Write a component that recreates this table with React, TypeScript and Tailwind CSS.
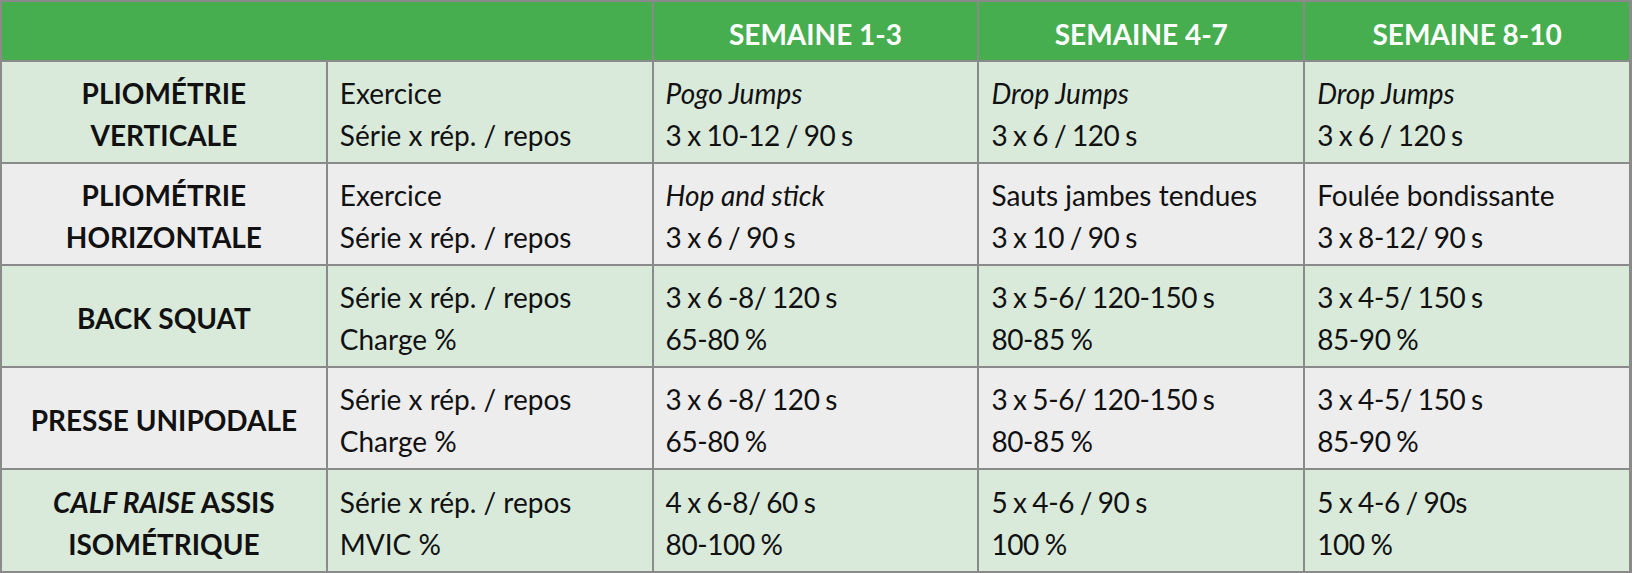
type Line = { text: string; italic?: boolean };
type Row = {
  label: React.ReactNode;
  tone: "green" | "gray";
  cells: Line[][];
};

const rows: Row[] = [
  {
    label: (
      <>
        PLIOMÉTRIE
        <br />
        VERTICALE
      </>
    ),
    tone: "green",
    cells: [
      [{ text: "Exercice" }, { text: "Série x rép. / repos" }],
      [{ text: "Pogo Jumps", italic: true }, { text: "3 x 10-12 / 90 s" }],
      [{ text: "Drop Jumps", italic: true }, { text: "3 x 6 / 120 s" }],
      [{ text: "Drop Jumps", italic: true }, { text: "3 x 6 / 120 s" }],
    ],
  },
  {
    label: (
      <>
        PLIOMÉTRIE
        <br />
        HORIZONTALE
      </>
    ),
    tone: "gray",
    cells: [
      [{ text: "Exercice" }, { text: "Série x rép. / repos" }],
      [{ text: "Hop and stick", italic: true }, { text: "3 x 6 / 90 s" }],
      [{ text: "Sauts jambes tendues" }, { text: "3 x 10 / 90 s" }],
      [{ text: "Foulée bondissante" }, { text: "3 x 8-12/ 90 s" }],
    ],
  },
  {
    label: <>BACK SQUAT</>,
    tone: "green",
    cells: [
      [{ text: "Série x rép. / repos" }, { text: "Charge %" }],
      [{ text: "3 x 6 -8/ 120 s" }, { text: "65-80 %" }],
      [{ text: "3 x 5-6/ 120-150 s" }, { text: "80-85 %" }],
      [{ text: "3 x 4-5/ 150 s" }, { text: "85-90 %" }],
    ],
  },
  {
    label: <>PRESSE UNIPODALE</>,
    tone: "gray",
    cells: [
      [{ text: "Série x rép. / repos" }, { text: "Charge %" }],
      [{ text: "3 x 6 -8/ 120 s" }, { text: "65-80 %" }],
      [{ text: "3 x 5-6/ 120-150 s" }, { text: "80-85 %" }],
      [{ text: "3 x 4-5/ 150 s" }, { text: "85-90 %" }],
    ],
  },
  {
    label: (
      <>
        <span className="italic">CALF RAISE</span> ASSIS
        <br />
        ISOMÉTRIQUE
      </>
    ),
    tone: "green",
    cells: [
      [{ text: "Série x rép. / repos" }, { text: "MVIC %" }],
      [{ text: "4 x 6-8/ 60 s" }, { text: "80-100 %" }],
      [{ text: "5 x 4-6 / 90 s" }, { text: "100 %" }],
      [{ text: "5 x 4-6 / 90s" }, { text: "100 %" }],
    ],
  },
];

const weeks = ["SEMAINE 1-3", "SEMAINE 4-7", "SEMAINE 8-10"];

// numeric lines are set a touch tighter: the source face has narrower figures
function lineClass(l: Line) {
  const cls: string[] = [];
  if (l.italic) cls.push("italic");
  if (/^[0-9]/.test(l.text)) cls.push("[word-spacing:-1px]", "tracking-[-0.4px]");
  return cls.join(" ");
}

export default function App() {
  return (
    <div
      className="w-[1632px] bg-[#8a8a8a] pt-[2px] pl-[2px] pr-[3px] pb-[2px] text-[28px] leading-[42px] text-[#111]"
      style={{ fontFamily: "Lato, 'Noto Sans', sans-serif" }}
    >
      <div className="grid grid-cols-5 gap-[2px] grid-rows-[58px_100px_100px_100px_100px_101px]">
        <div className="col-span-2 bg-[#46ae4f]" />
        {weeks.map((w) => (
          <div key={w} className="bg-[#46ae4f] flex items-center justify-center pt-[6px] font-bold text-white">
            {w}
          </div>
        ))}

        {rows.map((row, i) => {
          const bg = row.tone === "green" ? "bg-[#d9eadb]" : "bg-[#ededed]";
          return [
            <div key={`l${i}`} className={`${bg} flex items-center justify-center pt-[4px] text-center font-bold`}>
              <div>{row.label}</div>
            </div>,
            ...row.cells.map((lines, j) => (
              <div key={`c${i}-${j}`} className={`${bg} flex flex-col justify-center pt-[4px] pl-[12px]`}>
                {lines.map((l, k) => (
                  <div key={k} className={lineClass(l)}>
                    {l.text}
                  </div>
                ))}
              </div>
            )),
          ];
        })}
      </div>
    </div>
  );
}
